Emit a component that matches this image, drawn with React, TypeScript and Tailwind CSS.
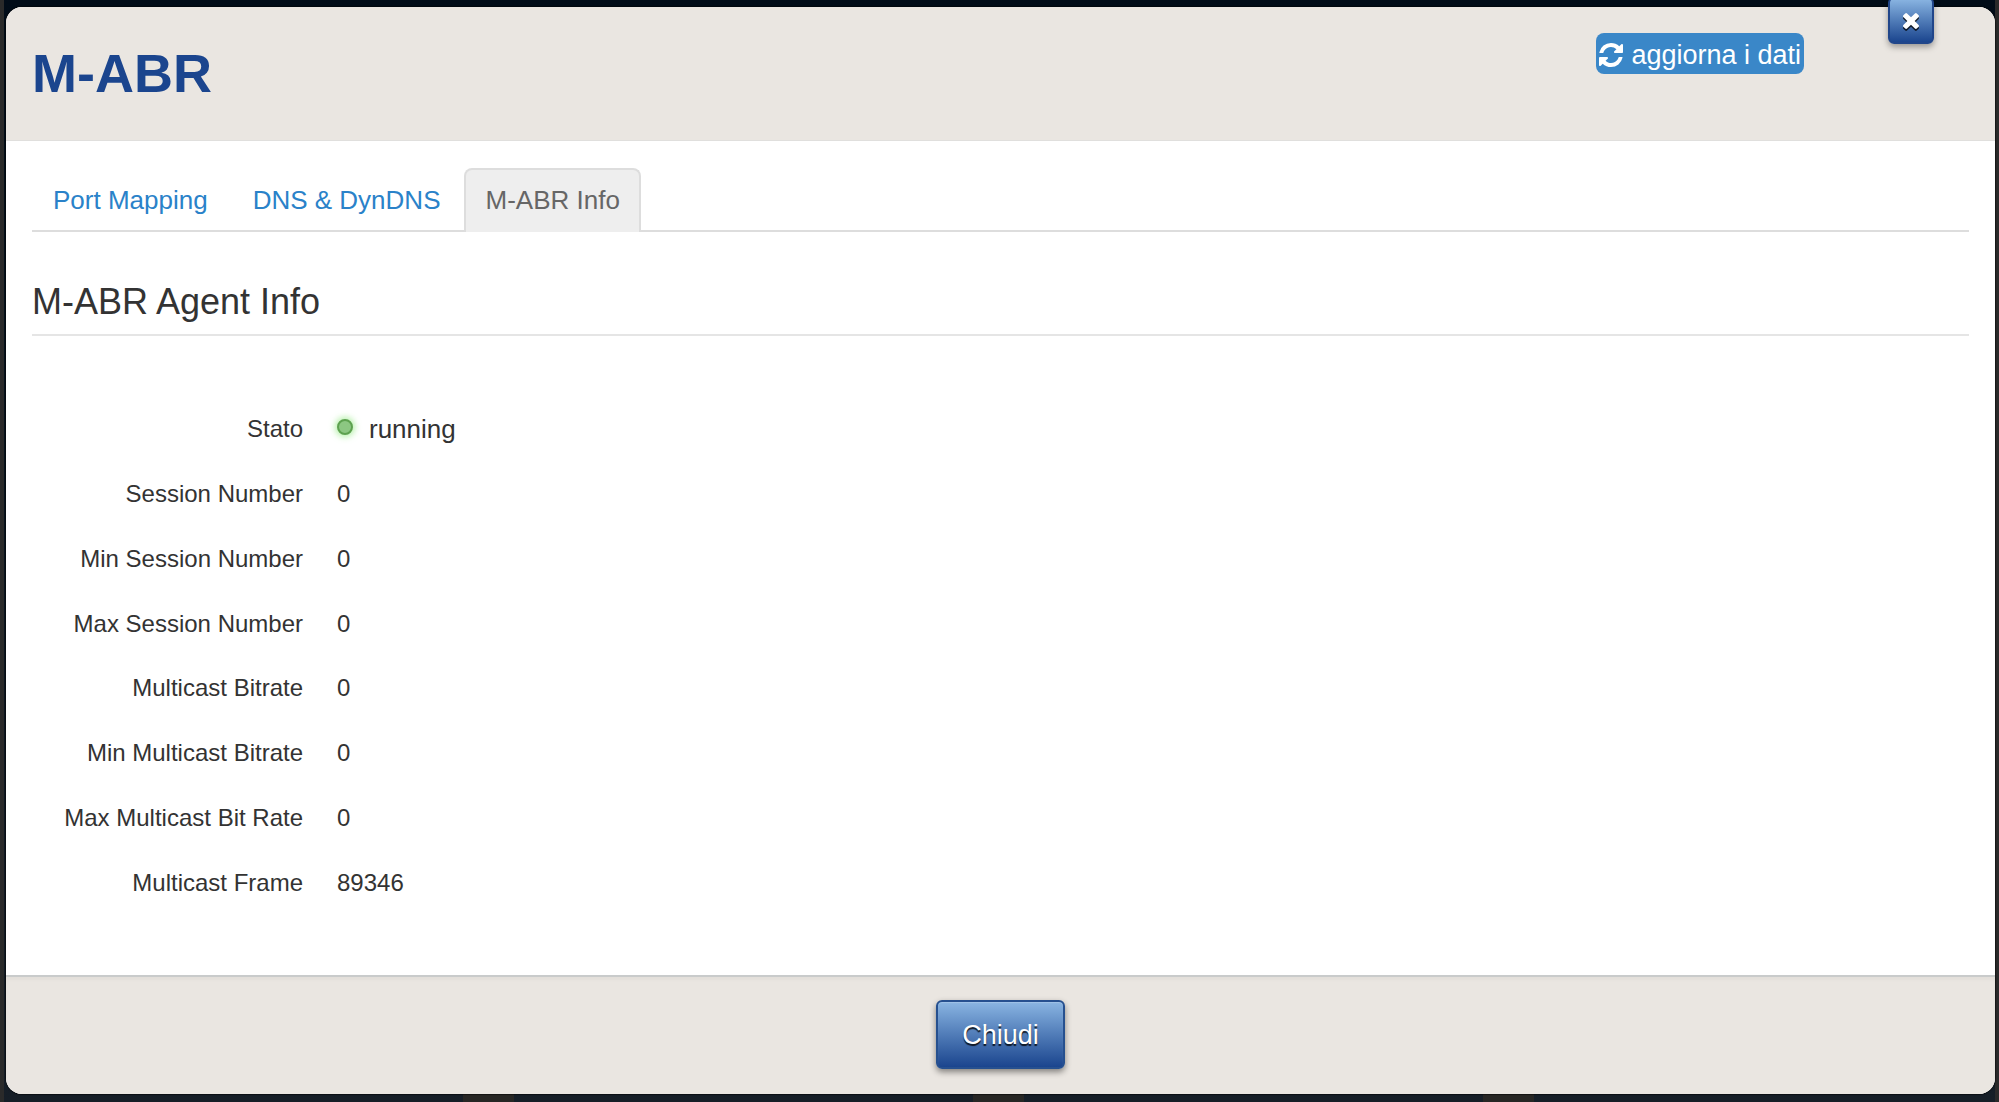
import React from "react";

type InfoRow = { label: string; value: string; running?: boolean };

const rows: InfoRow[] = [
  { label: "Stato", value: "running", running: true },
  { label: "Session Number", value: "0" },
  { label: "Min Session Number", value: "0" },
  { label: "Max Session Number", value: "0" },
  { label: "Multicast Bitrate", value: "0" },
  { label: "Min Multicast Bitrate", value: "0" },
  { label: "Max Multicast Bit Rate", value: "0" },
  { label: "Multicast Frame", value: "89346" },
];

const tabs = [
  { label: "Port Mapping", active: false },
  { label: "DNS & DynDNS", active: false },
  { label: "M-ABR Info", active: true },
];

function RefreshIcon() {
  return (
    <svg viewBox="0 0 1536 1536" className="size-6 shrink-0" fill="currentColor" aria-hidden="true">
      <path d="M1511 928q0 5-1 7-64 268-268 434.5t-478 166.5q-146 0-282.5-55t-243.5-157l-129 129q-19 19-45 19t-45-19-19-45v-448q0-26 19-45t45-19h448q26 0 45 19t19 45-19 45l-137 137q71 66 161 102t187 36q134 0 250-65t186-179q11-17 53-117 8-23 30-23h192q13 0 22.5 9.5t9.5 22.5zm25-800v448q0 26-19 45t-45 19h-448q-26 0-45-19t-19-45 19-45l138-138q-148-137-349-137-134 0-250 65t-186 179q-11 17-53 117-8 23-30 23h-199q-13 0-22.5-9.5t-9.5-22.5v-7q65-268 270-434.5t480-166.5q146 0 284 55.5t245 156.5l130-129q19-19 45-19t45 19 19 45z" />
    </svg>
  );
}

function CloseIcon() {
  return (
    <svg
      viewBox="110 366 1188 1188"
      className="size-4 drop-shadow-[0_2px_0_rgba(0,0,0,0.75)]"
      fill="currentColor"
      aria-hidden="true"
    >
      <path d="M1298 1322q0 40-28 68l-136 136q-28 28-68 28t-68-28l-294-294-294 294q-28 28-68 28t-68-28l-136-136q-28-28-28-68t28-68l294-294-294-294q-28-28-28-68t28-68l136-136q28-28 68-28t68 28l294 294 294-294q28-28 68-28t68 28l136 136q28 28 28 68t-28 68l-294 294 294 294q28 28 28 68z" />
    </svg>
  );
}

export default function App() {
  return (
    <div className="flex min-h-screen flex-col border-x-4 border-[#2a2a2a] bg-linear-to-b from-[#010c18] to-[#161e27] pt-[7px] font-['Liberation_Sans',Arial,sans-serif] text-[#333333]">
      <main className="relative ml-0.5 flex flex-1 flex-col rounded-2xl bg-white shadow-[0_0_1px_1px_rgba(0,0,0,0.5)]">
        <header className="flex h-[134px] shrink-0 items-start justify-between rounded-t-2xl border-b border-[#e0dfdd] bg-[#eae6e1] pr-[191px] pl-[26px]">
          <h1 className="pt-9 text-[54px] leading-[60px] font-bold text-[#1b458e]">M-ABR</h1>
          <button
            type="button"
            className="mt-[26px] flex items-center gap-2 rounded-lg bg-[#3a87c8] px-[3px] pt-1 pb-px text-[27px] leading-9 text-white"
          >
            <RefreshIcon />
            aggiorna i dati
          </button>
        </header>
        <button
          type="button"
          aria-label="Chiudi finestra"
          className="absolute -top-2.5 right-[61px] flex h-[47px] w-[46px] items-center justify-center rounded-md border-2 border-[#21468a] bg-linear-to-b from-[#8ab5e2] to-[#1b458e] text-white shadow-[0_3px_6px_rgba(0,0,0,0.35)]"
        >
          <CloseIcon />
        </button>

        <section className="flex flex-1 flex-col px-[26px] pt-[27px] pb-[76px]">
          <nav className="flex border-b-2 border-[#dddddd]">
            {tabs.map((tab) => (
              <a
                key={tab.label}
                href="#"
                aria-current={tab.active ? "page" : undefined}
                className={
                  tab.active
                    ? "-mb-0.5 rounded-t-lg border-2 border-b-0 border-[#dddddd] bg-[#eeeeee] px-[19px] pt-3.5 pb-4 text-[26px] leading-8 text-[#666666]"
                    : "mr-[3px] border-2 border-transparent px-[19px] pt-3.5 pb-3 text-[26px] leading-8 text-[#2a82c9]"
                }
              >
                {tab.label}
              </a>
            ))}
          </nav>
          <h2 className="mt-[50px] border-b-2 border-[#e5e5e5] pb-3 text-[36px] leading-10">M-ABR Agent Info</h2>
          <dl className="mt-[77px] flex flex-1 flex-col justify-between text-2xl">
            {rows.map((row) => (
              <div key={row.label} className="flex h-8 items-center gap-[34px] leading-8">
                <dt className="w-[271px] shrink-0 text-right">{row.label}</dt>
                {row.running ? (
                  <dd className="flex items-center gap-4 text-[26px]">
                    <span className="mb-1 size-4 rounded-full border-2 border-[#5da14f] bg-[#8cc782] shadow-[0_0_6px_2px_rgba(130,230,110,0.6)]" />
                    {row.value}
                  </dd>
                ) : (
                  <dd>{row.value}</dd>
                )}
              </div>
            ))}
          </dl>
        </section>

        <footer className="flex justify-center rounded-b-2xl border-t-2 border-[#c9cbcb] bg-[#eae6e1] pt-[23px] pb-[25px] shadow-[inset_0_3px_3px_rgba(0,0,0,0.03)]">
          <button
            type="button"
            className="rounded-md border-2 border-[#26508f] bg-linear-to-b from-[#8ab5e2] to-[#1b458e] px-6 pt-[15px] pb-[13px] text-[27px] leading-[37px] text-white shadow-[inset_0_1px_1px_rgba(255,255,255,0.2),0_3px_6px_rgba(0,0,0,0.45)] text-shadow-[0_2px_1px_rgba(0,0,0,0.8)]"
          >
            Chiudi
          </button>
        </footer>
      </main>
      <div className="flex h-2 shrink-0" aria-hidden="true">
        <span className="flex-[459]" />
        <span className="flex-[51] bg-[#272624]" />
        <span className="flex-[459]" />
        <span className="flex-[51] bg-[#272624]" />
        <span className="flex-[459]" />
        <span className="flex-[51] bg-[#272624]" />
        <span className="flex-[461]" />
      </div>
    </div>
  );
}
